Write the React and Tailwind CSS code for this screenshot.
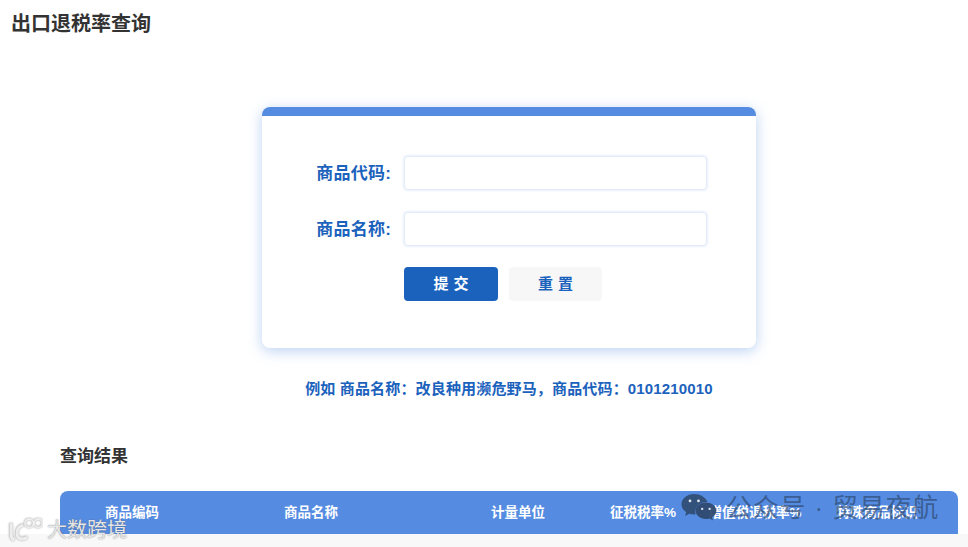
const font = "[font-family:'Liberation_Sans','Noto_Sans_CJK_SC',sans-serif]";

function Field({ label }) {
  return (
    <div className="flex items-center">
      <label className="w-[142px] pr-[13px] pt-[1px] text-right text-[17px] leading-[24px] font-semibold tracking-[0.2px] text-[#1b62bd]">
        {label}:
      </label>
      <input className="h-[34px] w-[303px] rounded-[4px] border border-[#e4ecf9] bg-white shadow-[0_0_3px_rgba(85,140,226,0.28)] outline-none" />
    </div>
  );
}

function WechatIcon() {
  return (
    <svg width="36" height="30" viewBox="0 0 34 28.300" className="absolute left-[681px] top-[493px]">
      <path d="M12.5 1C5.9 1 .5 5.2.5 10.6c0 3 1.700 5.600 4.400 7.400l-1 3.600 4-2.100c1.300.4 2.900.7 4.600.7.500 0 1 0 1.400-.1-.3-.9-.4-1.700-.4-2.600 0-5 4.800-8.900 10.600-8.900h.9C23.300 4.200 18.300 1 12.500 1z" fill="#2f4a70" fillOpacity="0.9" />
      <path d="M23.500 9c-5.400 0-9.700 3.500-9.700 7.800s4.300 7.800 9.700 7.800c1.200 0 2.300-.2 3.400-.5l3.300 1.800-.9-3c2.500-1.400 4.100-3.600 4.100-6.100C33.400 12.500 28.900 9 23.500 9z" fill="#2f4a70" fillOpacity="0.95" />
      <circle cx="8.500" cy="7.500" r="1.300" fill="#dfe7f3" />
      <circle cx="16.500" cy="7.500" r="1.300" fill="#dfe7f3" />
      <circle cx="20" cy="15" r="1.100" fill="#dfe7f3" />
      <circle cx="27" cy="15" r="1.100" fill="#dfe7f3" />
    </svg>
  );
}

function CornerLogo() {
  const marks = (
    <>
      <path d="M4 6v12c0 3 1 4 3 5" strokeWidth="3" />
      <path d="M16 8C11 9 9 13 10 18c1 4 6 5 10 2" strokeWidth="3" />
      <circle cx="22" cy="6" r="4.200" strokeWidth="1.800" />
      <circle cx="31" cy="6" r="4.200" strokeWidth="1.800" />
    </>
  );
  return (
    <svg width="36" height="26" viewBox="0 0 36 26" fill="none" className="absolute left-[7px] top-[517px]">
      <g stroke="#c4c4c4" className="[filter:drop-shadow(0_0_1px_#9a9a9a)]">{marks}</g>
      <g stroke="#f4f4f4" transform="translate(0.2 0.2)" strokeOpacity="0.85">{marks}</g>
    </svg>
  );
}

export default function App() {
  return (
    <div className={`relative h-[547px] w-[968px] overflow-hidden bg-white text-[#333] ${font}`}>
      <h1 className="pl-[11px] pt-[10px] text-[20px] leading-[28px] font-semibold">出口退税率查询</h1>

      <div className="ml-[262px] mt-[69px] h-[241px] w-[494px] overflow-hidden rounded-[8px] bg-white shadow-[0_3px_14px_rgba(85,140,226,0.4)]">
        <div className="h-[9px] bg-[#558ce2]" />
        <div className="flex flex-col gap-[22px] pt-[40px]">
          <Field label="商品代码" />
          <Field label="商品名称" />
        </div>
        <div className="ml-[142px] mt-[21px] flex gap-[11px]">
          <button className="h-[34px] w-[94px] rounded-[4px] bg-[#1b62bd] pl-[5px] text-[15px] font-semibold tracking-[5px] text-white">提交</button>
          <button className="h-[34px] w-[93px] rounded-[4px] bg-[#f7f7f7] pl-[5px] text-[15px] font-semibold tracking-[5px] text-[#1b62bd]">重置</button>
        </div>
      </div>

      <p className="ml-[262px] mt-[30px] w-[494px] text-center text-[15px] leading-[22px] font-semibold tracking-[0.16px] text-[#1b62bd]">
        例如 商品名称：改良种用濒危野马，商品代码：0101210010
      </p>

      <h2 className="ml-[60px] mt-[45px] text-[17px] leading-[24px] font-semibold">查询结果</h2>

      <div className="ml-[60px] mt-[22px] flex h-[43px] w-[898px] items-center rounded-t-[8px] bg-[#558ce2] pt-[1px] text-[13.5px] font-semibold text-white">
        <div className="w-[144px] text-center">商品编码</div>
        <div className="w-[214px] text-center">商品名称</div>
        <div className="ml-[30px] w-[140px] text-center">计量单位</div>
        <div className="ml-[10px] w-[90px] text-center">征税税率%</div>
        <div className="ml-[2px] w-[130px] text-center">增值税退税率%</div>
        <div className="w-[114px] text-center">特殊商品标识</div>
      </div>
      <div className="h-[13px] bg-[#f8f8f8]" />

      <WechatIcon />
      <div className="absolute left-[726px] top-[491px] text-[26px] leading-[34px] font-normal tracking-[0.8px] whitespace-nowrap text-[#2f4a70]/70">
        公众号 · 贸易夜航
      </div>
      <CornerLogo />
      <div className="absolute left-[47px] top-[518px] text-[20px] leading-[24px] whitespace-nowrap text-[#e6e6e6] [text-shadow:0_0_1.5px_rgba(90,90,90,0.8)]">
        大数跨境
      </div>
    </div>
  );
}
